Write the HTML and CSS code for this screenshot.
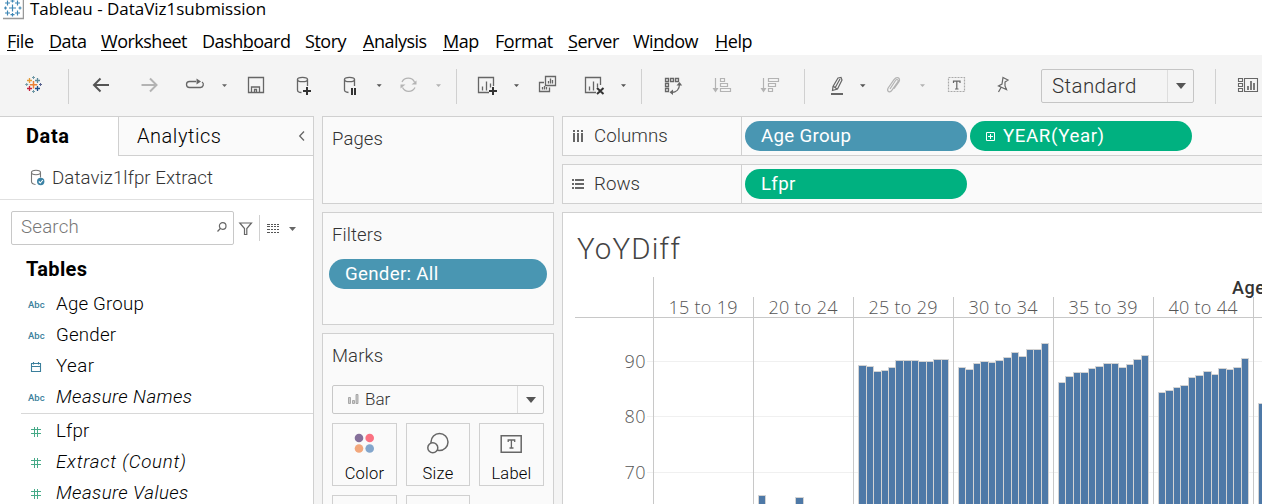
FILE: index.html
```html
<!DOCTYPE html>
<html lang="en">
<head>
<meta charset="utf-8">
<title>Tableau - DataViz1submission</title>
<link rel="stylesheet" href="styles.css">
</head>
<body>
<div class="app">
  <header class="titlebar">
    <svg class="app-icon" width="21" height="20" viewBox="3 0 21 20"><path d="M3 18.500H23.500V0" stroke="#999" stroke-width="1.500" fill="none"/><path d="M12.500 4.500v7M9 8h7M7.500 .5v5M5 3h5M17.500 .5v5M15 3h5M7.500 10.500v5M5 13h5M17.500 10.500v5M15 13h5M12.500 13v3.500M10.500 14.700h4M12.500 0v2.500M10.500 1h4M4 8h3M5.500 6.500v3M18.500 8h3M20 6.500v3" stroke="#3f87b5" stroke-width="1.200" fill="none"/></svg>
    <span class="window-title">Tableau - DataViz1submission</span>
  </header>
  <nav class="menubar">
    <span class="m-file"><u>F</u>ile</span><span class="m-data"><u>D</u>ata</span><span class="m-work"><u>W</u>orksheet</span><span class="m-dash">Dash<u>b</u>oard</span><span class="m-story">S<u>t</u>ory</span><span class="m-ana"><u>A</u>nalysis</span><span class="m-map"><u>M</u>ap</span><span class="m-format">F<u>o</u>rmat</span><span class="m-server"><u>S</u>erver</span><span class="m-window">Wi<u>n</u>dow</span><span class="m-help"><u>H</u>elp</span>
  </nav>
  <div class="toolbar">
    <svg width="68" height="61" viewBox="0 55 68 61" fill="none" stroke-width="1.300">
      <path d="M33.500 81v7.500M29.700 84.700h7.600" stroke="#eb8035" stroke-width="1.500"/>
      <path d="M29.500 78v5M27 80.500h5" stroke="#e39a35"/><path d="M37.500 78v5M35 80.500h5" stroke="#5b8a9c"/>
      <path d="M29.500 86v5M27 88.500h5" stroke="#c5223f"/><path d="M37.500 86v5M35 88.500h5" stroke="#1f4e87"/>
      <path d="M33.500 76v3M32 77.500h3M26.700 83v3M25.200 84.500h3M33.500 90v3M32 91.500h3" stroke="#7199a6" stroke-width="1"/><path d="M40.500 83v3M39 84.500h3" stroke="#5b6591" stroke-width="1"/>
    </svg>
    <i class="sep"></i>
    <svg width="387" height="61" viewBox="69 55 387 61" fill="none" stroke="#666" stroke-width="1.300">
      <path d="M94 85h15M100.500 78.500L94 85l6.500 6.500" stroke="#555" stroke-width="2"/>
      <path d="M141.500 85h15M150 78.500l6.500 6.500-6.500 6.500" stroke="#b3b3b3" stroke-width="2"/>
      <path d="M196 81.500h-6.500a3 3 0 0 0 0 6h11a3 3 0 0 0 1.500-5.500"/><path d="M196.500 78.500l4.500 3-4.500 3z" fill="#666" stroke="none"/>
      <path d="M222 84.200h5l-2.500 2.800z" fill="#666" stroke="none"/>
      <path d="M248.500 77.500h15v15h-15zM251.500 92v-5h8v5M254.500 89.500h2v3h-2z"/>
      <path d="M297.500 79.500V90q0 2.500 4 2.500M307.500 79.500V86"/><ellipse cx="302.500" cy="79.500" rx="5" ry="2.200"/>
      <path d="M307 87v8M303 91h8" stroke="#333" stroke-width="2"/>
      <path d="M344.500 79.500V90q0 2 4 2.500M354.500 79.500V86"/><ellipse cx="349.500" cy="79.500" rx="5" ry="2.200"/>
      <path d="M352 88v7M355 88v7" stroke="#333" stroke-width="2"/>
      <path d="M376.700 84.200h5l-2.500 2.800z" fill="#555" stroke="none"/>
      <g stroke="#b3b3b3"><path d="M402 82a7 7 0 0 1 12.500 0M415 87.500a7 7 0 0 1-12.500 0"/><path d="M416.500 80.500v4h-5zM400.500 88.500v-4h5z" fill="#b3b3b3" stroke="none"/></g>
      <path d="M436 84.200h5l-2.500 2.800z" fill="#b3b3b3" stroke="none"/>
    </svg>
    <i class="sep"></i>
    <svg width="184" height="61" viewBox="457 55 184 61" fill="none" stroke="#666" stroke-width="1.300">
      <path d="M489 92.500H478.500v-15h15V86M482.500 86.500v4M486.500 81.500v9M490.500 83.500v4"/>
      <path d="M493 87v8M489 91h8" stroke="#333" stroke-width="2"/>
      <path d="M514 84.200h5l-2.500 2.800z" fill="#555" stroke="none"/>
      <path d="M545.500 76.500h10v9h-10zM548.500 81v2.500M550.500 78.500v5M552.500 80v3.500M544 82.500h-4.500v9h10v-4M542.500 87v2.500M544.500 86v3.500M546.500 87v2.500"/>
      <path d="M596 92.500H585.500v-15h15V85M589.500 86.500v4M593.500 81.500v9M597.500 83.500v4"/>
      <path d="M597 88l6.500 6M603.500 88l-6.500 6" stroke="#333" stroke-width="2"/>
      <path d="M621 84.200h5l-2.500 2.800z" fill="#555" stroke="none"/>
    </svg>
    <i class="sep"></i>
    <svg width="162" height="61" viewBox="642 55 162 61" fill="none" stroke="#666">
      <path d="M665.500 78.500h3v3h-3zM670.500 78.500h3v3h-3zM675.500 78.500h3v3h-3zM665.500 83.500h3v3h-3zM665.500 88.500h3v3h-3zM679.500 84c0 5-3 8.500-8 8.500" stroke-width="1.300"/>
      <path d="M676.500 85.500l3-3.500 2.700 3.500zM673 89.500v5.500l-3.500-2.700z" fill="#666" stroke="none"/>
      <g stroke="#b3b3b3"><path d="M715.500 78v11M720.500 78.500h4v3h-4zM720.500 83.500h7v3h-7zM720.500 88.500h10v3h-10z" stroke-width="1.200"/><path d="M712.500 88h6l-3 4.500z" fill="#b3b3b3" stroke="none"/>
      <path d="M763.500 78v11M768.500 78.500h10v3h-10zM768.500 83.500h7v3h-7zM768.500 88.500h4v3h-4z" stroke-width="1.200"/><path d="M760.500 88h6l-3 4.500z" fill="#b3b3b3" stroke="none"/></g>
    </svg>
    <i class="sep"></i>
    <svg width="236" height="61" viewBox="805 55 236 61" fill="none" stroke="#666" stroke-width="1.200">
      <path d="M831 94h12" stroke-width="2"/><path d="M838 78l3-.5 1 2.500-4.500 9-5 1.500.5-4zM840 79l-5 9M833 86l4 3"/>
      <path d="M860 84.200h5.500l-2.700 3z" fill="#555" stroke="none"/>
      <path d="M890 89l5.500-8.500c1.500-2 3.500-.5 2.500 1.200l-6 8.500c-2 3-5.500 1.500-4-2l6-8.500c3-4 7-1.500 5 2l-5 7" stroke="#b3b3b3"/>
      <path d="M920 84.200h5l-2.500 2.800z" fill="#b3b3b3" stroke="none"/>
      <rect x="948.500" y="77.500" width="16" height="14" stroke="#aaa" stroke-dasharray="2 1"/>
      <path d="M953.500 83v-1.800h6.500V83M956.800 81.500v7.500M955 89h3.500"/>
      <path d="M1003 77.500l5 2.500-3 2v4l1.500 3.500-8-3.500 3.500-2zM1001 87.500l-2.500 4.500M1003 77.500l-1 6.500"/>
    </svg>
    <div class="fit"><span>Standard</span><b><i class="tri"></i></b></div>
    <i class="sep after-fit"></i>
    <svg width="46" height="61" viewBox="1216 55 46 61" fill="none" stroke="#666" stroke-width="1.100"><path d="M1238.500 78.500h4v3h-4zM1238.500 83.500h4v3h-4zM1238.500 88.500h4v3h-4zM1244.500 78.500h13v13h-13z"/><path d="M1248 86v4M1251 81v9M1254 83v7" stroke-width="1.700"/></svg>
  </div>
  <main class="workspace">
    <aside class="datapane">
      <div class="tabs"><div class="tab active">Data</div><div class="tab other"><span>Analytics</span><svg width="8" height="12" viewBox="0 0 8 12"><path d="M6 1.500L1.700 6 6 10.500" stroke="#666" stroke-width="1.300" fill="none"/></svg></div></div>
      <div class="source"><svg width="16" height="18" viewBox="30 169 16 18" fill="none" stroke="#777" stroke-width="1.100"><path d="M31.500 172.500v9q0 2.500 4 3M40.500 172.500v5"/><ellipse cx="36" cy="172.500" rx="4.500" ry="2.200"/><circle cx="40.700" cy="181.500" r="3.700" fill="#3b82a5" stroke="none"/><path d="M38.800 181.500l1.500 1.500 2.500-3" stroke="#fff"/></svg><span>Dataviz1lfpr Extract</span></div>
      <div class="searchrow">
        <div class="search"><span>Search</span><svg width="10" height="11" viewBox="0 0 10 11" fill="none" stroke="#666" stroke-width="1.200"><circle cx="5.700" cy="4" r="3.300"/><path d="M3.300 6.500L.5 9.500"/></svg></div>
        <svg width="26" height="26" viewBox="234 214 26 26" fill="none" stroke="#666" stroke-width="1.200"><path d="M239.800 222h11.700l-4.700 5.500v6h-2.300v-6z"/></svg>
        <i class="vline"></i>
        <svg width="40" height="26" viewBox="260 214 40 26"><path d="M267 223.500h12M267 225.500h12M267 228.500h12M267 231.500h12" stroke="#555" stroke-dasharray="3 1 2 1 2 1 2 0"/><path d="M289 226h7l-3.500 4z" fill="#666"/></svg>
      </div>
      <h2>Tables</h2>
      <ul class="fields">
        <li><em class="abc">Abc</em><span>Age Group</span></li>
        <li><em class="abc">Abc</em><span>Gender</span></li>
        <li><svg class="type" width="16" height="16" viewBox="28 358 16 16" fill="none" stroke="#3b7f9c" stroke-width="1.100"><path d="M31.500 362.500h9v8h-9zM31.500 365.500h9M33.500 361v2.500M38.500 361v2.500"/></svg><span class="f-year">Year</span></li>
        <li><em class="abc">Abc</em><span class="it">Measure Names</span></li>
      </ul>
      <ul class="fields measures">
        <li><svg class="type" width="16" height="16" viewBox="0 0 16 16"><path d="M3 5.500h10M3 9.500h10M6.500 3v10M9.500 3v10" stroke="#46aa88"/></svg><span>Lfpr</span></li>
        <li><svg class="type" width="16" height="16" viewBox="0 0 16 16"><path d="M3 5.500h10M3 9.500h10M6.500 3v10M9.500 3v10" stroke="#46aa88"/></svg><span class="it f-count">Extract (Count)</span></li>
        <li><svg class="type" width="16" height="16" viewBox="0 0 16 16"><path d="M3 5.500h10M3 9.500h10M6.500 3v10M9.500 3v10" stroke="#46aa88"/></svg><span class="it">Measure Values</span></li>
      </ul>
    </aside>
    <section class="cards">
      <div class="card pages"><h3>Pages</h3></div>
      <div class="card filters"><h3>Filters</h3><div class="pill blue">Gender: All</div></div>
      <div class="card marks"><h3>Marks</h3>
        <div class="marktype"><svg width="11" height="11" viewBox="0 0 11 11" fill="#ccc" stroke="#999" stroke-width=".8"><path d="M.5 3.500h2v6h-2zM4.500 6.500h2v3h-2zM8 .5h2v9H8z"/></svg><span>Bar</span><b><i class="tri"></i></b></div>
        <div class="buttons">
          <div><svg width="24" height="24" viewBox="0 0 24 24"><circle cx="6" cy="8" r="4.300" fill="#85709a"/><circle cx="16.700" cy="8" r="4.300" fill="#fa7181"/><circle cx="6" cy="18.500" r="4.300" fill="#f2a77c"/><circle cx="16.700" cy="18.500" r="4.300" fill="#83a6cc"/></svg><span>Color</span></div>
          <div><svg width="24" height="24" viewBox="0 0 24 24" stroke="#666" stroke-width="1.500" fill="#fafafa"><circle cx="13.500" cy="12" r="8.500"/><circle cx="6.800" cy="17.700" r="5"/></svg><span>Size</span></div>
          <div><svg width="24" height="24" viewBox="0 0 24 24" stroke="#666" stroke-width="1.500" fill="none"><path d="M1.200 5.700h20v16.500h-20z"/><path d="M8.200 12v-2h6.500v2M11.400 10v8M9.500 18h4" stroke-width="1.300"/></svg><span>Label</span></div>
          <div></div><div></div>
        </div>
      </div>
    </section>
    <section class="sheet">
      <div class="shelf"><div class="shelf-label"><svg width="12" height="12" viewBox="0 0 12 12" fill="#666"><path d="M1 0h2v2H1zM5 0h2v2H5zM9 0h2v2H9zM1 3h2v9H1zM5 3h2v9H5zM9 3h2v9H9z"/></svg><span>Columns</span></div><div class="pill blue">Age Group</div><div class="pill green p-year"><svg width="9" height="9" viewBox="0 0 9 9"><path d="M.5.5h8v8h-8zM2 4.500h5M4.500 2v5" stroke="#fff" fill="none"/></svg><span>YEAR(Year)</span></div></div>
      <div class="shelf"><div class="shelf-label"><svg width="12" height="12" viewBox="0 0 12 12" fill="#666"><path d="M0 1h2v2H0zM0 5h2v2H0zM0 9h2v2H0zM3 1h9v2H3zM3 5h9v2H3zM3 9h9v2H3z"/></svg><span>Rows</span></div><div class="pill green">Lfpr</div></div>
      <div class="view">
        <svg width="699" height="291" viewBox="563 213 699 291">
          <text class="sheet-title" x="577" y="259" textLength="103">YoYDiff</text>
          <text class="axis-title" x="1232" y="294" textLength="89">Age Group</text>
          <path d="M647 361.500H1262M647 416.500H1262M647 472.500H1262" stroke="#f0f0f0"/>
          <g class="bars">
            <path transform="translate(758.500 .5)" d="M0 510V495H7V510M37 510V497H45V510"/>
            <path transform="translate(858.500 .5)" d="M0 510V365H8V510M8 510V366H15V510M15 510V371H23V510M23 510V370H30V510M30 510V367H37V510M37 510V360H45V510M45 510V360H53V510M53 510V360H60V510M60 510V361H68V510M68 510V361H75V510M75 510V359H83V510M83 510V359H90V510"/>
            <path transform="translate(958.500 .5)" d="M0 510V367H7V510M7 510V369H15V510M15 510V363H22V510M22 510V361H30V510M30 510V362H37V510M37 510V360H45V510M45 510V357H53V510M53 510V352H60V510M60 510V356H68V510M68 510V349H75V510M75 510V349H83V510M83 510V343H90V510"/>
            <path transform="translate(1058.500 .5)" d="M0 510V382H7V510M7 510V376H15V510M15 510V372H22V510M22 510V372H30V510M30 510V368H37V510M37 510V366H45V510M45 510V363H53V510M53 510V363H60V510M60 510V367H68V510M68 510V364H75V510M75 510V359H83V510M83 510V355H90V510"/>
            <path transform="translate(1158.500 .5)" d="M0 510V392H7V510M7 510V390H15V510M15 510V387H22V510M22 510V385H30V510M30 510V377H37V510M37 510V375H45V510M45 510V371H53V510M53 510V374H60V510M60 510V368H68V510M68 510V369H75V510M75 510V367H83V510M83 510V358H90V510"/>
            <path transform="translate(1258.500 .5)" d="M0 510V403H7V510"/>
          </g>
          <path d="M575 317.500H1262M653.500 277V504M753.500 297V504M853.500 297V504M953.500 297V504M1053.500 297V504M1153.500 297V504M1253.500 297V504" stroke="#c8c8c8" fill="none"/>
          <g class="tick"><text x="668.500" y="314" textLength="69">15 to 19</text><text x="768.500" y="314" textLength="69">20 to 24</text><text x="868.500" y="314" textLength="69">25 to 29</text><text x="968.500" y="314" textLength="69">30 to 34</text><text x="1068.500" y="314" textLength="69">35 to 39</text><text x="1168.500" y="314" textLength="69">40 to 44</text>
          <text x="624.500" y="367.500" textLength="21">90</text><text x="624.500" y="423" textLength="21">80</text><text x="624.500" y="479" textLength="21">70</text></g>
        </svg>
      </div>
    </section>
  </main>
</div>
</body>
</html>
```
FILE: styles.css
```css
* { box-sizing: border-box; }
body { margin: 0; background: #f4f4f4; font-family: Roboto, "Open Sans", sans-serif; font-weight: 300; color: #333; }
svg { display: block; flex: none; }
h2, h3, ul { margin: 0; padding: 0; list-style: none; }
span { white-space: nowrap; }
.app { width: 1262px; height: 504px; overflow: hidden; display: flex; flex-direction: column; }

.titlebar { height: 27px; flex: none; background: #fff; display: flex; align-items: flex-start; padding-left: 3px; gap: 6px; font-family: "Open Sans", sans-serif; font-weight: 400; color: #000; }
.window-title { font-size: 17px; line-height: 18px; letter-spacing: -.02px; }
.menubar { height: 28px; flex: none; background: #fff; display: flex; padding-left: 7px; font: 400 18px/28px "Open Sans", sans-serif; color: #000; letter-spacing: -.5px; }
.menubar span { flex: none; }
.menubar u { text-underline-offset: 2px; text-decoration-thickness: 1px; }
.m-file { width: 42px; } .m-data { width: 52px; } .m-work { width: 101px; } .m-dash { width: 103px; } .m-story { width: 58px; }
.m-ana { width: 80px; } .m-map { width: 52px; } .m-format { width: 73px; } .m-server { width: 65px; } .m-window { width: 82px; } .m-help { width: 40px; }

.toolbar { height: 61px; flex: none; display: flex; }
.sep { width: 1px; flex: none; height: 35px; margin-top: 14px; background: #d0d0d0; }
.fit { width: 153px; flex: none; height: 34px; margin-top: 14px; border: 1px solid #c5c5c5; border-radius: 2px; display: flex; justify-content: space-between; font-size: 20.5px; line-height: 32px; padding-left: 10px; letter-spacing: .4px; }
.fit b, .marktype b { width: 26px; border-left: 1px solid #ddd; display: flex; align-items: center; justify-content: center; }
.tri { border: 5px solid transparent; border-top: 6px solid #555; border-bottom: 0; }
.after-fit { margin-left: 21px; }

.workspace { flex: 1; min-height: 0; display: flex; gap: 8px; }
.datapane { width: 314px; flex: none; background: #fff; border-top: 1px solid #d0d0d0; border-right: 1px solid #d0d0d0; }
.tabs { display: flex; height: 39px; font-size: 20px; line-height: 38px; color: #000; }
.tab.active { width: 118px; padding-left: 26px; font-weight: 700; letter-spacing: .6px; }
.tab.other { flex: 1; background: #fafafa; border-left: 1px solid #d0d0d0; border-bottom: 1px solid #d0d0d0; padding: 0 7px 0 18px; display: flex; justify-content: space-between; align-items: center; font-weight: 300; letter-spacing: .55px; }
.source { height: 44px; border-bottom: 1px solid #e0e0e0; display: flex; align-items: center; padding-left: 30px; gap: 6px; font-size: 18.7px; letter-spacing: .07px; }
.searchrow { display: flex; align-items: center; margin: 11px 0 0 11px; height: 34px; }
.search { width: 223px; height: 34px; border: 1px solid #c8c8c8; border-radius: 2px; display: flex; align-items: center; justify-content: space-between; padding: 0 6px 2px 9px; font-size: 18.7px; color: #777; letter-spacing: .2px; }
.vline { width: 1px; height: 26px; background: #d0d0d0; margin-left: -1px; }
.datapane h2 { font-size: 20px; font-weight: 700; line-height: 24px; color: #000; margin: 12px 0 8px 26px; letter-spacing: .35px; }
.fields li { height: 31px; display: flex; align-items: center; padding-left: 28px; font-size: 18.7px; color: #000; letter-spacing: .2px; }
.fields li > span { margin: -1px 0 0 12px; }
.type { width: 16px; }
.abc { width: 17px; margin-right: -1px; font: 500 9.5px/14px Roboto, sans-serif; letter-spacing: 0; color: #3b7f9c; white-space: nowrap; }
.fields .f-year { letter-spacing: .5px; }
.it { font-style: italic; letter-spacing: .42px; }
.fields .f-count { letter-spacing: .75px; }
.measures { margin-left: 21px; border-top: 1px solid #d8d8d8; padding-top: 2px; }
.measures li { padding-left: 7px; }

.cards { width: 232px; flex: none; display: flex; flex-direction: column; gap: 8px; }
.card { flex: none; background: #fafafa; border: 1px solid #d0d0d0; padding: 10px 9px; }
.card h3 { font-size: 18.5px; line-height: 24px; font-weight: 300; letter-spacing: .1px; }
.pages { height: 88px; } .filters { height: 113px; }
.marks { height: 200px; }
.pill { height: 30px; flex: none; border-radius: 15px; color: #fff; font-size: 18.7px; font-weight: 400; line-height: 30px; padding-left: 16px; letter-spacing: .3px; }
.blue { background: #4996b2; } .green { background: #00b180; }
.filters .pill { margin: 12px -3px 0; }
.marktype { height: 29px; margin-top: 17px; border: 1px solid #c8c8c8; border-radius: 2px; display: flex; align-items: center; padding-left: 15px; gap: 6px; font-size: 17px; }
.marktype span { margin-top: -2px; }
.marktype b { margin-left: auto; height: 27px; }
.buttons { display: grid; grid-template-columns: 65px 64px 65px; gap: 9px; margin-top: 9px; }
.buttons div { height: 63px; border: 1px solid #d0d0d0; display: flex; flex-direction: column; align-items: center; padding-top: 6px; font-size: 16.5px; line-height: 20px; gap: 10px; color: #000; letter-spacing: .25px; }

.sheet { flex: 1; min-width: 0; display: flex; flex-direction: column; gap: 8px; }
.shelf { height: 40px; flex: none; background: #fafafa; border: 1px solid #d0d0d0; border-right: 0; display: flex; align-items: center; gap: 3px; }
.shelf-label { width: 179px; height: 38px; border-right: 1px solid #d0d0d0; display: flex; align-items: center; padding-left: 9px; gap: 10px; font-size: 18.7px; letter-spacing: .05px; }
.shelf .pill { width: 222px; }
.shelf .p-year { display: flex; align-items: center; gap: 8px; letter-spacing: .6px; }
.view { flex: 1; min-height: 0; background: #fff; border: 1px solid #d0d0d0; border-right: 0; border-bottom: 0; overflow: hidden; }
.sheet-title { font: 300 29.5px Roboto, sans-serif; fill: #444; }
.axis-title { font: 500 18px Roboto, sans-serif; fill: #333; }
.tick { font: 300 18px "Open Sans", sans-serif; fill: #555; }
.bars { fill: #4e79a7; stroke: #d3d3d3; }
```
